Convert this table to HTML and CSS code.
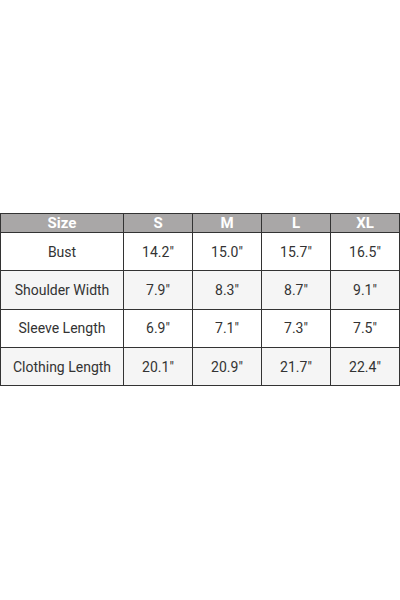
FILE: index.html
```html
<!DOCTYPE html>
<html>
<head>
<meta charset="utf-8">
<link rel="stylesheet" href="styles.css">
</head>
<body>
<div class="page">
<table class="size-table">
  <colgroup>
    <col class="c-label"><col class="c-val"><col class="c-val"><col class="c-val"><col class="c-val">
  </colgroup>
  <thead>
    <tr><th>Size</th><th>S</th><th>M</th><th>L</th><th>XL</th></tr>
  </thead>
  <tbody>
    <tr><td>Bust</td><td>14.2"</td><td>15.0"</td><td>15.7"</td><td>16.5"</td></tr>
    <tr class="alt"><td>Shoulder Width</td><td>7.9"</td><td>8.3"</td><td>8.7"</td><td>9.1"</td></tr>
    <tr><td>Sleeve Length</td><td>6.9"</td><td>7.1"</td><td>7.3"</td><td>7.5"</td></tr>
    <tr class="alt"><td>Clothing Length</td><td>20.1"</td><td>20.9"</td><td>21.7"</td><td>22.4"</td></tr>
  </tbody>
</table>
</div>
</body>
</html>
```
FILE: styles.css
```css
html, body {
  margin: 0;
  padding: 0;
  background: #ffffff;
}
.page {
  width: 400px;
  height: 600px;
  padding-top: 213px;
  box-sizing: border-box;
}
.size-table {
  width: 399px;
  border-collapse: collapse;
  table-layout: fixed;
  font-family: Roboto, "Liberation Sans", sans-serif;
  font-size: 14px;
  color: #333333;
}
.c-label { width: 123px; }
.c-val { width: 69px; }
.size-table th,
.size-table td {
  border: 1.5px solid #333333;
  text-align: center;
  padding: 0;
}
.size-table th {
  background: #a9a7a7;
  color: #ffffff;
  font-weight: bold;
  height: 18px;
  line-height: 18px;
  font-size: 15px;
}
.size-table td {
  height: 37.3px;
  background: #ffffff;
}
.size-table tr.alt td {
  background: #f5f5f5;
}
```
